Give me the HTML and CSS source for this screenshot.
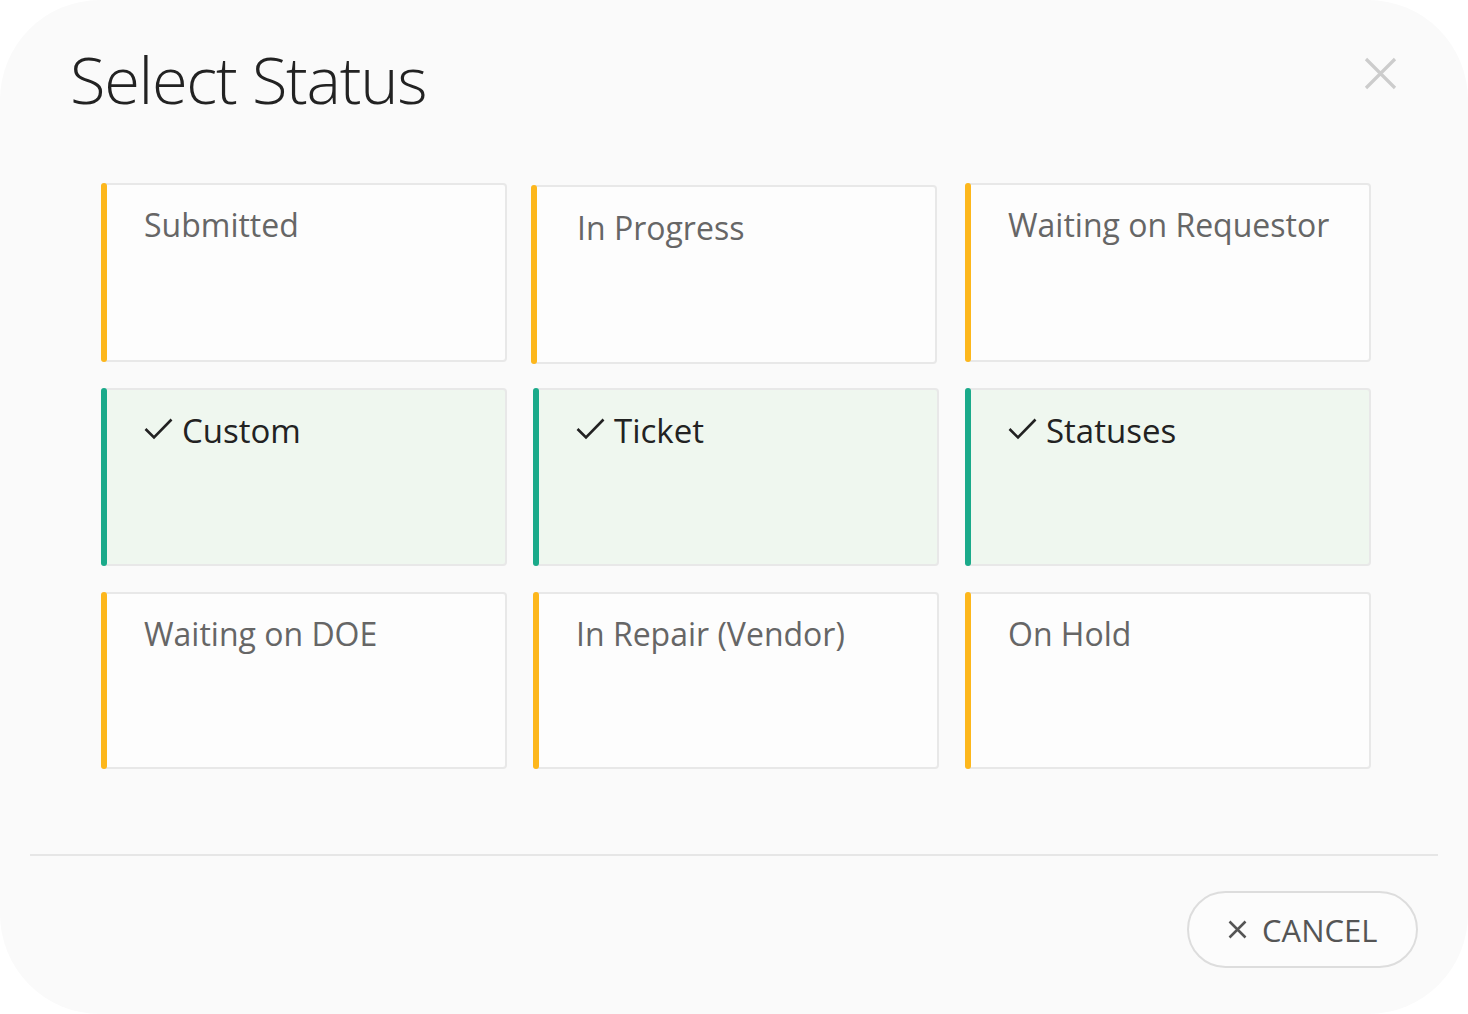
FILE: index.html
```html
<!DOCTYPE html>
<html lang="en">
<head>
  <meta charset="UTF-8" />
  <meta name="viewport" content="width=device-width, initial-scale=1.0" />
  <title>Select Status</title>
  <link rel="stylesheet" href="styles.css">
</head>
<body>
  <div class="dialog">
    <div class="dialog-header">
      <h1>Select Status</h1>
      <button class="close-btn" aria-label="Close">
        <svg width="33" height="33" viewBox="0 0 33 33">
          <path d="M2 2 L31 31 M31 2 L2 31" stroke="#cccccc" stroke-width="3.2" fill="none" />
        </svg>
      </button>
    </div>

    <div class="status-grid">
      <div class="status-card">Submitted</div>
      <div class="status-card raised">In Progress</div>
      <div class="status-card">Waiting on Requestor</div>

      <div class="status-card selected">
        <svg class="check" width="29" height="22" viewBox="0 0 29 22">
          <path d="M1.5 11 L10 19.5 L27.5 1.5" stroke="#222" stroke-width="2.6" fill="none" />
        </svg>
        Custom
      </div>
      <div class="status-card selected">
        <svg class="check" width="29" height="22" viewBox="0 0 29 22">
          <path d="M1.5 11 L10 19.5 L27.5 1.5" stroke="#222" stroke-width="2.6" fill="none" />
        </svg>
        Ticket
      </div>
      <div class="status-card selected">
        <svg class="check" width="29" height="22" viewBox="0 0 29 22">
          <path d="M1.5 11 L10 19.5 L27.5 1.5" stroke="#222" stroke-width="2.6" fill="none" />
        </svg>
        Statuses
      </div>

      <div class="status-card">Waiting on DOE</div>
      <div class="status-card">In Repair (Vendor)</div>
      <div class="status-card">On Hold</div>
    </div>

    <div class="divider"></div>

    <div class="dialog-footer">
      <button class="cancel-btn">
        <svg width="19" height="19" viewBox="0 0 19 19">
          <path d="M1.5 1.5 L17.5 17.5 M17.5 1.5 L1.5 17.5" stroke="#555" stroke-width="2.5" fill="none" />
        </svg>
        CANCEL
      </button>
    </div>
  </div>
</body>
</html>
```

FILE: styles.css
```css
body {
  margin: 0;
  background: #ffffff;
  font-family: "Open Sans", "Noto Sans", Arial, sans-serif;
}
.dialog {
  width: 1468px;
  height: 1014px;
  background: #fafafa;
  border-radius: 100px;
  box-sizing: border-box;
  overflow: hidden;
}
.dialog-header {
  display: flex;
  justify-content: space-between;
  align-items: flex-start;
  padding: 46px 71px 0 70px;
}
.dialog-header h1 {
  margin: 0;
  font-size: 65px;
  line-height: 66px;
  font-weight: 300;
  color: #222;
  letter-spacing: -1.3px;
}
.close-btn {
  background: none;
  border: none;
  padding: 0;
  margin-top: 11px;
  cursor: pointer;
  display: flex;
}
.status-grid {
  display: grid;
  grid-template-columns: repeat(3, 406px);
  grid-template-rows: 179px 178px 177px;
  column-gap: 26px;
  row-gap: 26px;
  margin: 71px 0 0 101px;
}
.status-card {
  position: relative;
  background: #fdfdfd;
  border: 2px solid #e8e8e8;
  border-radius: 4px;
  padding: 17px 20px 0 41px;
  font-size: 32px;
  line-height: 46px;
  color: #666;
  display: flex;
  align-items: flex-start;
}
.status-card::before {
  content: "";
  position: absolute;
  left: -2px;
  top: -2px;
  bottom: -2px;
  width: 6px;
  border-radius: 3px;
  background: #fdb71c;
}
.status-card.raised {
  top: 2px;
  left: -2px;
  padding-top: 18px;
  padding-left: 44px;
}
.status-card.selected {
  background: #eff7ef;
  color: #222;
  font-size: 33px;
  padding-top: 18px;
}
.status-card.selected::before {
  background: #1aaa8a;
}
.check {
  margin: 10px 9px 0 0;
  flex-shrink: 0;
}
.divider {
  height: 2px;
  background: #e6e6e6;
  margin: 85px 30px 0 30px;
}
.dialog-footer {
  display: flex;
  justify-content: flex-end;
  padding: 35px 50px 0 0;
}
.cancel-btn {
  display: flex;
  align-items: center;
  gap: 15px;
  height: 77px;
  width: 231px;
  padding: 0 0 0 39px;
  box-sizing: border-box;
  background: #fcfcfc;
  border: 2px solid #dddddd;
  border-radius: 40px;
  font-family: "Open Sans", "Noto Sans", Arial, sans-serif;
  font-size: 31px;
  color: #555;
  cursor: pointer;
}
```
